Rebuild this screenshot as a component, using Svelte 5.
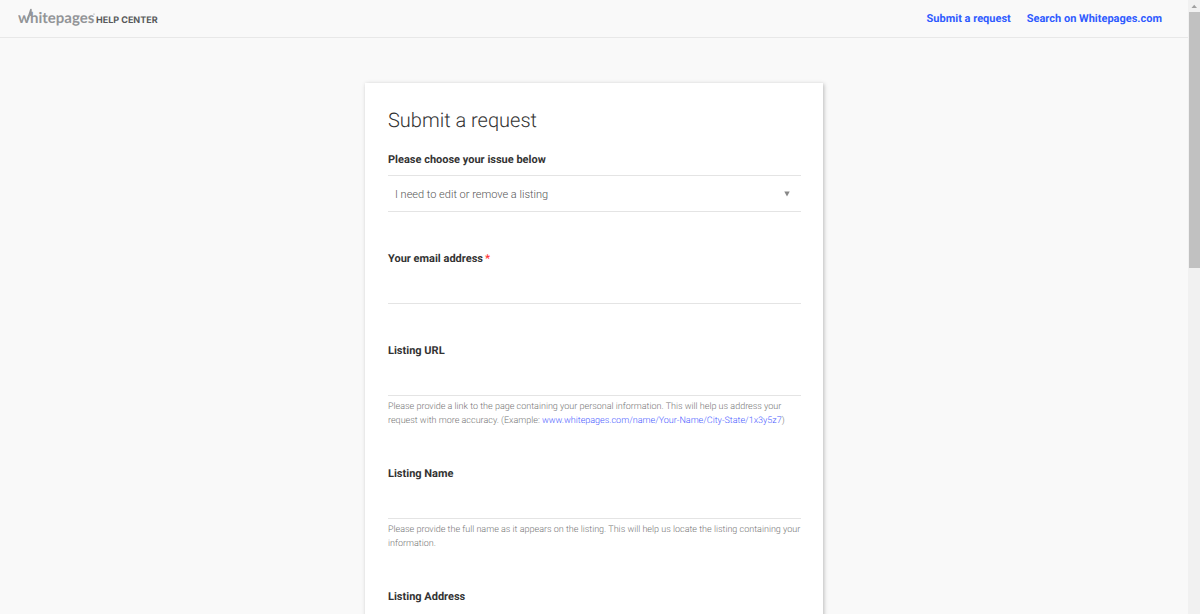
<!-- App.svelte -->
<script lang="ts">
  type Field = {
    id: string;
    label: string;
    type: string;
    required?: boolean;
    hint?: string;
    example?: string;
  };

  const navLinks = ['Submit a request', 'Search on Whitepages.com'];

  const fields: Field[] = [
    { id: 'email', label: 'Your email address', type: 'email', required: true },
    {
      id: 'listing-url',
      label: 'Listing URL',
      type: 'text',
      hint: 'Please provide a link to the page containing your personal information. This will help us address your request with more accuracy.',
      example: 'www.whitepages.com/name/Your-Name/City-State/1x3y5z7'
    },
    {
      id: 'listing-name',
      label: 'Listing Name',
      type: 'text',
      hint: 'Please provide the full name as it appears on the listing. This will help us locate the listing containing your information.'
    },
    { id: 'listing-address', label: 'Listing Address', type: 'text' }
  ];
</script>

<div class="window">
  <div class="page">
    <header class="topbar">
      <a class="logo" href="#home" aria-label="Whitepages Help Center">
        <svg width="144" height="24" viewBox="0 0 144 24">
          <text class="brand" x="0" y="17">whitepages</text>
          <path d="M9.6 13.5 L12.9 3.6 V10" />
          <circle cx="76" cy="8" r="0.6" />
          <text class="help" x="78" y="17">HELP CENTER</text>
        </svg>
      </a>
      <nav>
        {#each navLinks as link}
          <a href="#{link}">{link}</a>
        {/each}
      </nav>
    </header>

    <main>
      <form class="card">
        <h1>Submit a request</h1>

        <div class="field">
          <label for="issue">Please choose your issue below</label>
          <div class="select">
            <select id="issue">
              <option>I need to edit or remove a listing</option>
            </select>
            <svg class="arrow" width="6" height="6" viewBox="0 0 6 6"><path d="M0.3 0.5 H5.7 L3 5.5 Z" /></svg>
          </div>
        </div>

        {#each fields as field}
          <div class="field">
            <label for={field.id}>{field.label}{#if field.required}<span class="star">*</span>{/if}</label>
            <input id={field.id} type={field.type} />
            {#if field.hint}
              <p>
                {field.hint}
                {#if field.example}(Example: <a href="#example">{field.example}</a>){/if}
              </p>
            {/if}
          </div>
        {/each}
      </form>
    </main>
  </div>

  <div class="scrollbar" aria-hidden="true">
    <svg width="12" height="12" viewBox="0 0 12 12"><path d="M3.5 8 H9 L6.2 4.8 Z" /></svg>
    <div class="thumb"></div>
  </div>
</div>

<style>
  :global(body) { background: #f9f9f9; }

  .window { display: flex; height: 100vh; font-family: Roboto, sans-serif; font-weight: 300; color: #333; text-rendering: geometricPrecision; }
  .page { flex: 1; min-width: 0; overflow-y: auto; scrollbar-width: none; }

  .topbar { display: flex; align-items: center; justify-content: space-between; height: 37px; padding: 0 26px 0 18px; border-bottom: 1px solid #e8e8e8; }
  .logo, .logo svg { display: block; }
  .logo svg { margin-bottom: 1px; }
  .logo path { fill: none; stroke: #929497; stroke-width: 1.6; stroke-linejoin: round; }
  .logo circle { fill: #929497; }
  .brand { font: 700 15px Lato, sans-serif; fill: #929497; }
  .help { font: 700 9px Inter, sans-serif; fill: #58595b; }

  nav { display: flex; gap: 16px; }
  nav a { font-size: 11px; font-weight: 700; line-height: 16px; color: #2f5bff; text-decoration: none; }

  main { padding: 45px 20px; }
  .card { box-sizing: border-box; max-width: 458px; margin: 0 auto; padding: 23px 22px 40px 23px; background: #fff; box-shadow: 1px 1px 4px rgba(0, 0, 0, .25); }

  h1 { margin: 0 0 18px; font-size: 20px; font-weight: 300; line-height: 28px; }

  .field { margin-bottom: 39px; }
  label { display: block; font-size: 11px; font-weight: 700; line-height: 16px; }
  .star { margin-left: 2px; color: #f33; }

  input { display: block; box-sizing: border-box; width: 100%; height: 37px; padding: 0 8px; border: 0; border-bottom: 1px solid #e4e4e4; background: none; font: inherit; font-size: 11px; outline: none; }

  .select { display: flex; align-items: center; margin-top: 7px; padding: 0 11px 0 7px; border: solid #e4e4e4; border-width: 1px 0; }
  select { flex: 1; height: 35px; padding: 2px 0 0; border: 0; appearance: none; background: none; font: inherit; font-size: 11px; color: #555; outline: none; }
  .arrow { fill: #888; }

  p { margin: 4px 0 -1px; font-size: 9px; line-height: 14px; color: #777; }
  p a { color: #4a5cff; text-decoration: none; }

  .scrollbar { width: 12px; background: #f1f1f1; }
  .scrollbar svg { display: block; fill: #a0a0a0; }
  .thumb { height: 41.7%; margin-left: 1px; background: #c1c1c1; }
</style>
